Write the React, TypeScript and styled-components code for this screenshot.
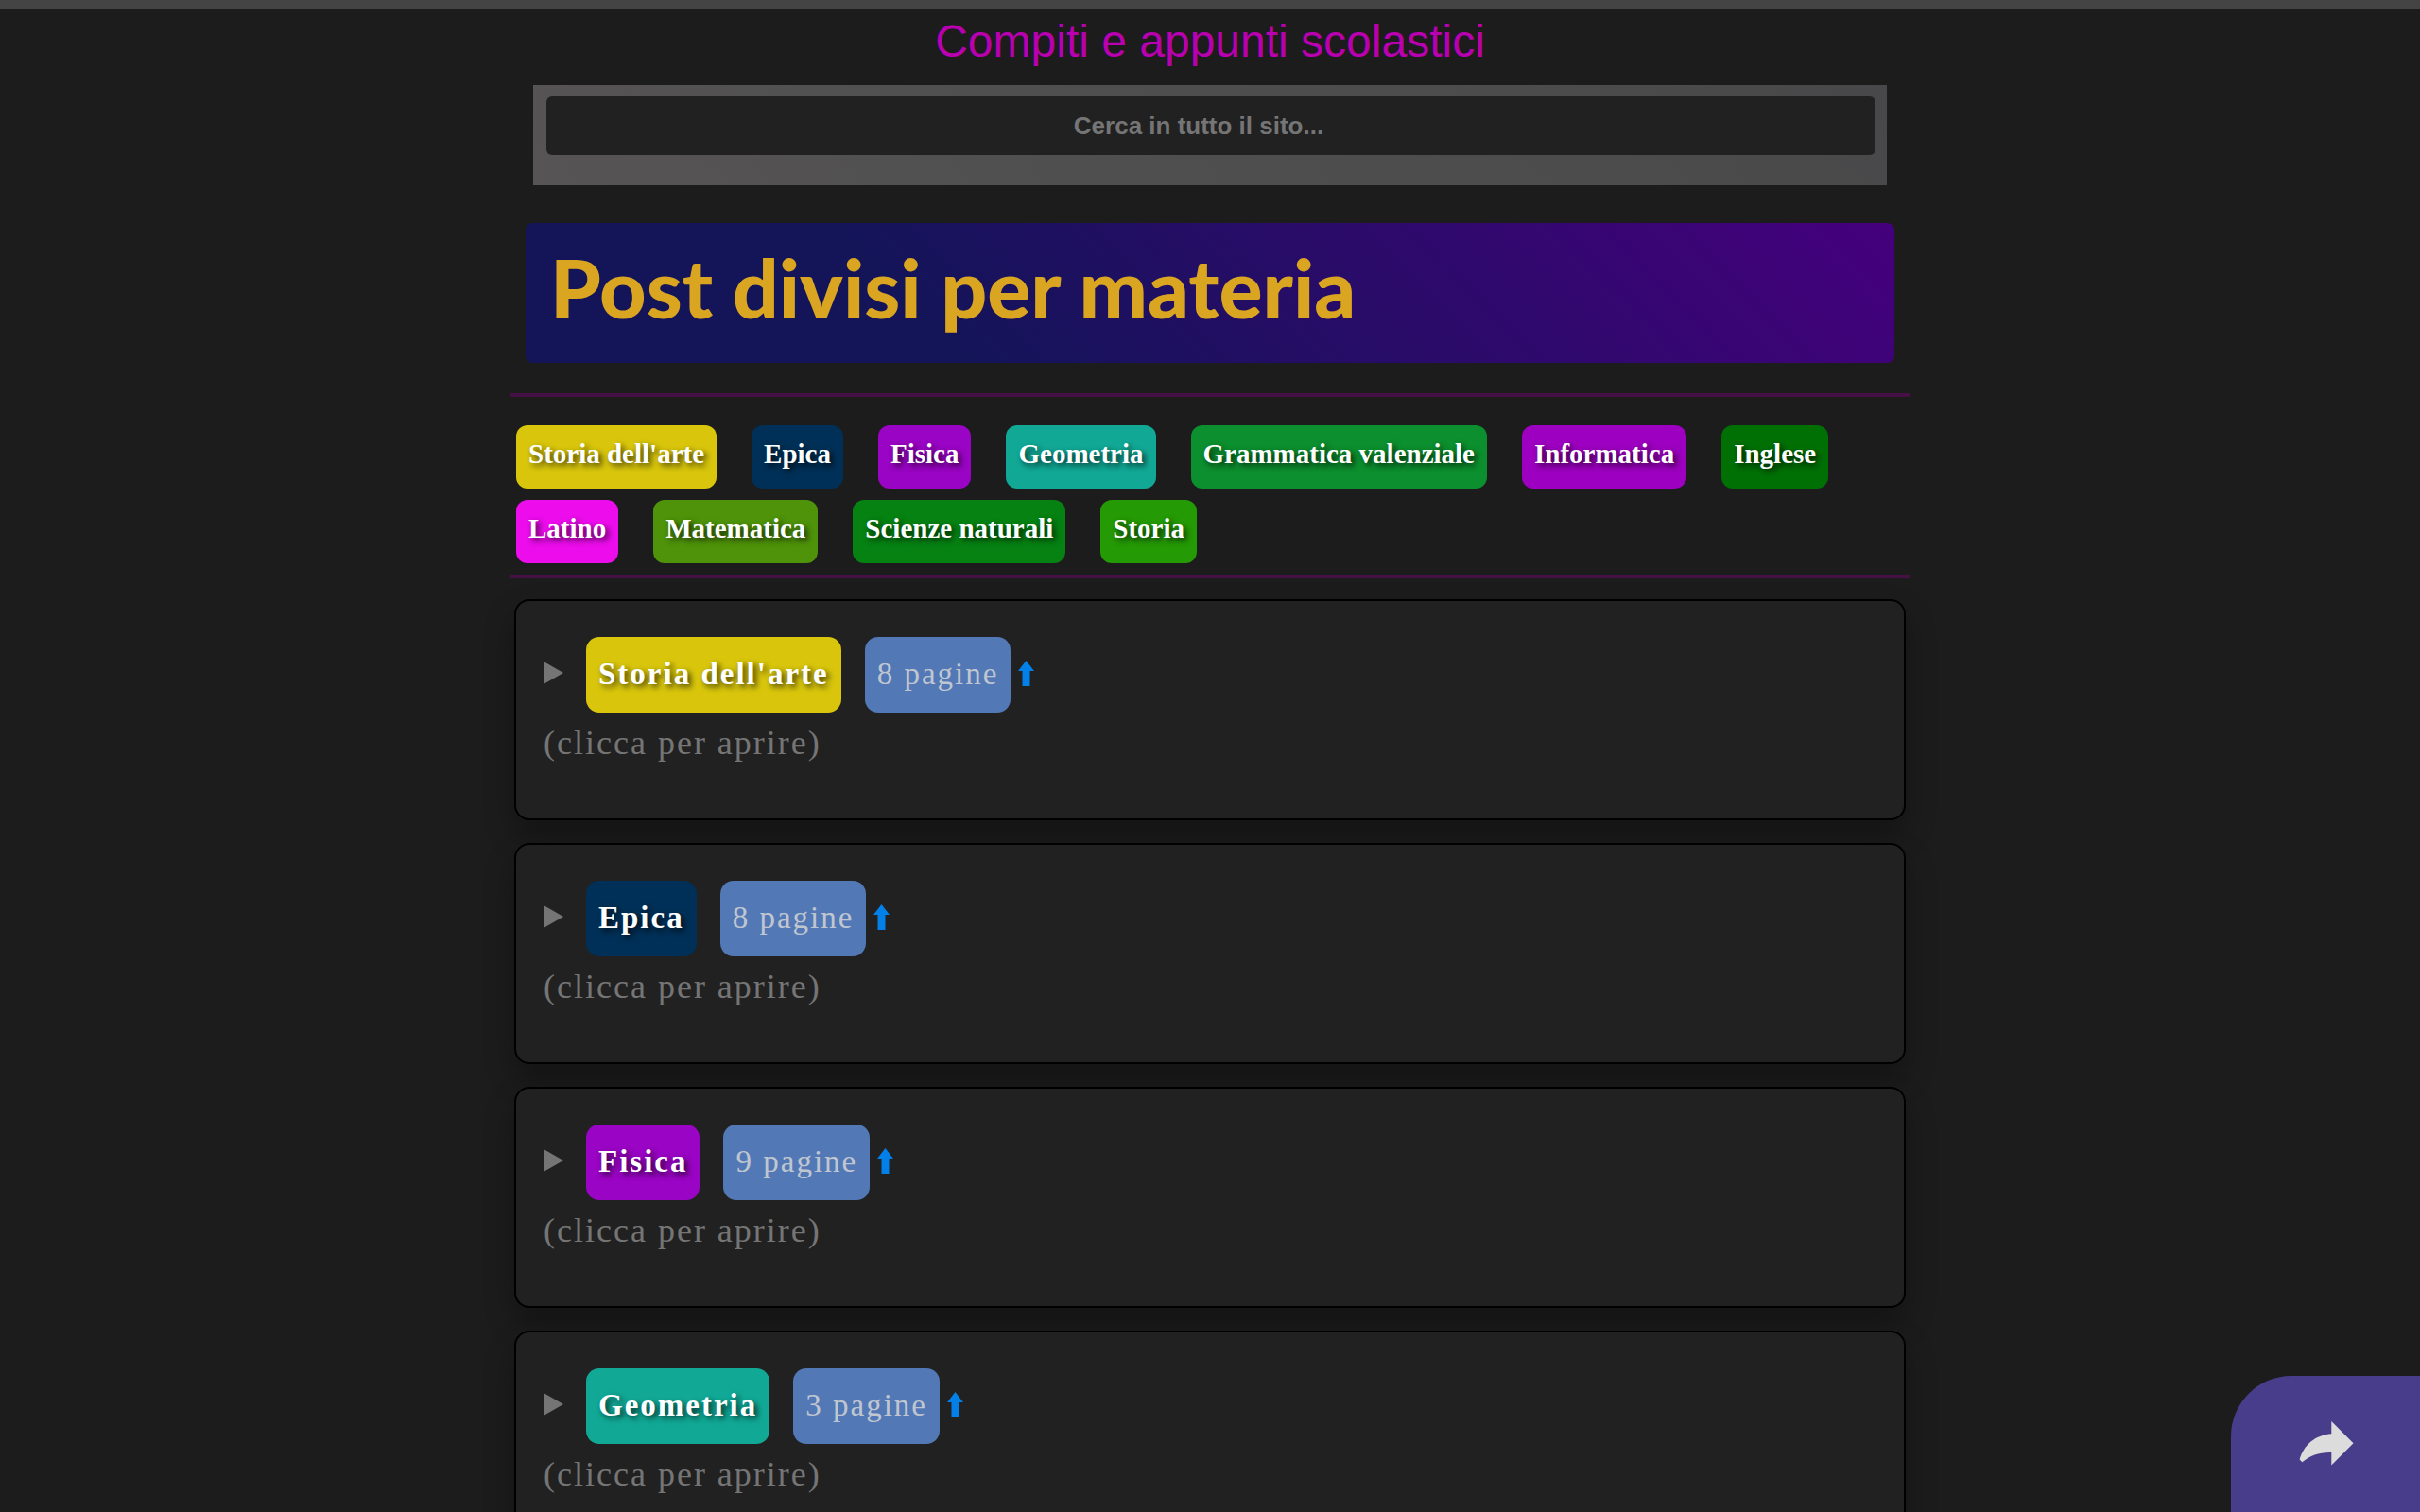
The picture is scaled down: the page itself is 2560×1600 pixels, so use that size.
import React from "react";
import styled, { createGlobalStyle } from "styled-components";

const GlobalStyle = createGlobalStyle`
  * { box-sizing: border-box; }
  body {
    margin: 0;
    background: #1c1c1c;
    color: #757575;
    font-family: "Liberation Serif", "Times New Roman", serif;
    overflow-x: hidden;
  }
  html { scrollbar-width: none; }
`;

const TopBar = styled.div`
  height: 10px;
  background: #444444;
`;

const Page = styled.div`
  max-width: 1480px;
  margin: 0 auto;
  padding-top: 6px;
`;

const SiteTitle = styled.p`
  margin: 0;
  color: #b800b0;
  font-family: "Liberation Sans", Arial, sans-serif;
  font-size: 48px;
  line-height: 56px;
  text-align: center;
`;

const SearchForm = styled.form`
  margin: 18px 24px 40px;
  padding: 12px 12px 32px 14px;
  background: linear-gradient(45deg, #575455, #4f4f4f 40%, #4c4c4c 75%, #48484a);
`;

const SearchInput = styled.input`
  display: block;
  width: 100%;
  height: 62px;
  padding: 0 20px 0 16px;
  border: 0;
  border-radius: 6px;
  background: #212121;
  color: #c0c0c0;
  font: bold 26px "Liberation Sans", Arial, sans-serif;
  text-align: center;
  &::placeholder {
    color: #757575;
    opacity: 1;
  }
`;

const Banner = styled.h1`
  margin: 0 16px 32px;
  padding: 18px 26px 30px;
  border-radius: 8px;
  background: linear-gradient(45deg, #141459 30%, #45007d);
  color: #daa520;
  font-family: Lato, sans-serif;
  font-size: 86px;
  font-weight: 900;
  line-height: 100px;
`;

const Rule = styled.hr`
  height: 4px;
  margin: 0;
  border: 0;
  background: #451145;
`;

const SubjectNav = styled.nav`
  display: flex;
  flex-wrap: wrap;
  gap: 12px 37px;
  padding: 30px 6px 12px;
`;

const Tag = styled.a<{ $color: string }>`
  padding: 14px 13px 21px;
  border-radius: 12px;
  background: ${(p) => p.$color};
  color: #ffffff;
  font-size: 29px;
  font-weight: bold;
  line-height: 32px;
  text-decoration: none;
  text-shadow: 3px 3px 6px rgba(0, 0, 0, 0.75);
`;

const CardList = styled.main`
  display: flex;
  flex-direction: column;
  gap: 24px;
  padding: 22px 4px;
`;

const Card = styled.details`
  padding: 38px 29px 60px;
  border: 2px solid #000000;
  border-radius: 16px;
  background: #212121;
  box-shadow: 0 16px 32px rgba(0, 0, 0, 0.3);
`;

const Summary = styled.summary`
  list-style: none;
  cursor: pointer;
  letter-spacing: 2px;
  &::-webkit-details-marker {
    display: none;
  }
`;

const Heading = styled.div`
  display: flex;
  align-items: center;
`;

const Marker = styled.svg`
  width: 21px;
  height: 24px;
  margin: 0 24px 4px 0;
  fill: #757575;
`;

const CardTag = styled.span<{ $color: string }>`
  margin-right: 25px;
  padding: 20px 13px 22px;
  border-radius: 14px;
  background: ${(p) => p.$color};
  color: #ffffff;
  font-size: 33px;
  font-weight: bold;
  line-height: 38px;
  text-shadow: 3px 3px 6px rgba(0, 0, 0, 0.75);
`;

const PageCount = styled.span`
  padding: 20px 13px 22px;
  border-radius: 14px;
  background: #5278b6;
  color: #c0c6d0;
  font-size: 33px;
  line-height: 38px;
`;

const TopLink = styled.a`
  display: flex;
  margin: 0 0 4px 8px;
  svg {
    width: 17px;
    height: 27px;
    fill: #0380e8;
  }
`;

const Hint = styled.div`
  margin-top: 12px;
  font-size: 36px;
  line-height: 40px;
`;

const ShareButton = styled.button`
  position: fixed;
  right: 0;
  bottom: 0;
  display: flex;
  justify-content: center;
  width: 200px;
  height: 144px;
  padding: 48px 0 0 2px;
  border: 0;
  border-radius: 64px 0 0 0;
  background: #483d8b;
  cursor: pointer;
  svg {
    width: 58px;
    height: 47px;
    fill: #dcdcdc;
  }
`;

const subjects = [
  { name: "Storia dell'arte", color: "#d9c60c" },
  { name: "Epica", color: "#003057" },
  { name: "Fisica", color: "#9a04c4" },
  { name: "Geometria", color: "#11a996" },
  { name: "Grammatica valenziale", color: "#0c8f2e" },
  { name: "Informatica", color: "#9d00c0" },
  { name: "Inglese", color: "#007005" },
  { name: "Latino", color: "#ec0cec" },
  { name: "Matematica", color: "#4e9309" },
  { name: "Scienze naturali", color: "#058212" },
  { name: "Storia", color: "#249a05" },
];

const pageCounts = [8, 8, 9, 3];

const slug = (name: string) => name.toLowerCase().replace(/[^a-z]+/g, "-");

export default function App() {
  return (
    <>
      <GlobalStyle />
      <TopBar />
      <Page id="top">
        <SiteTitle>Compiti e appunti scolastici</SiteTitle>
        <SearchForm role="search" onSubmit={(e) => e.preventDefault()}>
          <SearchInput
            type="search"
            aria-label="Cerca in tutto il sito"
            placeholder="Cerca in tutto il sito..."
          />
        </SearchForm>
        <Banner>Post divisi per materia</Banner>
        <Rule />
        <SubjectNav>
          {subjects.map((s) => (
            <Tag key={s.name} href={`#${slug(s.name)}`} $color={s.color}>
              {s.name}
            </Tag>
          ))}
        </SubjectNav>
        <Rule />
        <CardList>
          {pageCounts.map((count, i) => (
            <Card key={subjects[i].name} id={slug(subjects[i].name)}>
              <Summary>
                <Heading>
                  <Marker viewBox="0 0 21 24" aria-hidden="true">
                    <path d="M0 0 21 12 0 24Z" />
                  </Marker>
                  <CardTag $color={subjects[i].color}>{subjects[i].name}</CardTag>
                  <PageCount>{count} pagine</PageCount>
                  <TopLink href="#top" aria-label="Torna su">
                    <svg viewBox="0 0 17 27">
                      <path d="M8.5 0 17 11H12.5V27H4.5V11H0Z" />
                    </svg>
                  </TopLink>
                </Heading>
                <Hint>(clicca per aprire)</Hint>
              </Summary>
            </Card>
          ))}
        </CardList>
      </Page>
      <ShareButton type="button" aria-label="Condividi">
        <svg viewBox="0 0 58 47">
          <path d="M34.3 0 57.5 23.3 34.3 46.5V33C22 32.6 12 36 3.3 43.3L.6 40.5C5 25 17 14.5 34.3 13.2Z" />
        </svg>
      </ShareButton>
    </>
  );
}
